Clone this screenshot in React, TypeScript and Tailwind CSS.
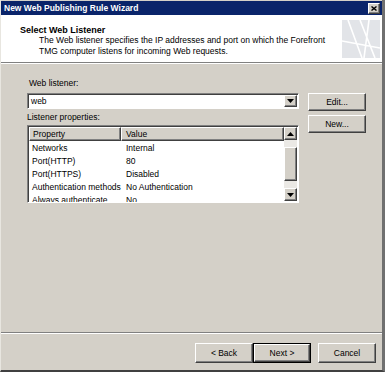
const raised =
  'border border-t-white border-l-white border-r-[#404040] border-b-[#404040] shadow-[inset_-1px_-1px_#808080] bg-[#d4d0c8]'
const sunken =
  'border border-t-[#808080] border-l-[#808080] border-r-white border-b-white shadow-[inset_1px_1px_#404040]'

const rows = [
  ['Networks', 'Internal'],
  ['Port(HTTP)', '80'],
  ['Port(HTTPS)', 'Disabled'],
  ['Authentication methods', 'No Authentication'],
  ['Always authenticate', 'No'],
]

function Arrow({ up }: { up?: boolean }) {
  return (
    <svg width="7" height="4" viewBox="0 0 7 4" className={up ? '' : 'rotate-180'}>
      <path d="M3.5 0 L7 4 L0 4 Z" fill="#000" />
    </svg>
  )
}

function Button({ label, primary }: { label: string; primary?: boolean }) {
  if (primary) {
    return (
      <div className="border border-black">
        <div className={`${raised} w-[56px] h-[18px] flex items-center justify-center`}>{label}</div>
      </div>
    )
  }
  return <div className={`${raised} w-[58px] h-[20px] flex items-center justify-center`}>{label}</div>
}

export default function App() {
  return (
    <div className="w-[385px] h-[372px] bg-[#d4d0c8] flex flex-col border-l border-l-[#e8e6e0] border-r-[3px] border-r-[#707070] border-b-2 border-b-[#404040] font-['Liberation_Sans',Arial,sans-serif] text-[8.5px] text-black leading-none overflow-hidden">
      {/* Title bar */}
      <div className="mt-[1px] h-[14px] bg-[#0a246a] flex items-center justify-between pl-[3px] pr-[2px]">
        <span className="text-white font-bold text-[8.5px]">New Web Publishing Rule Wizard</span>
        <div className={`${raised} w-[12px] h-[11px] flex items-center justify-center`}>
          <svg width="6" height="5" viewBox="0 0 6 5">
            <path d="M0.5 0.5 L5.5 4.5 M5.5 0.5 L0.5 4.5" stroke="#000" strokeWidth="1.4" />
          </svg>
        </div>
      </div>

      {/* Header */}
      <div className="h-[47px] bg-white flex items-start justify-between pl-[19px] pr-[2px] pt-[4px]">
        <div className="flex flex-col pt-[3px]">
          <span className="font-bold text-[9px] mt-[4px]">Select Web Listener</span>
          <span className="ml-[19px] leading-[11px]">
            The Web listener specifies the IP addresses and port on which the Forefront
            <br />
            TMG computer listens for incoming Web requests.
          </span>
        </div>
        <svg width="38" height="38" viewBox="0 0 38 38" className="mt-[1px]">
          <rect width="38" height="38" fill="#e2e4e8" />
          <path d="M6 0 L20 38 M18 0 L33 38 M0 21 L38 28 M27 0 L22 38" stroke="#fff" strokeWidth="1.6" />
        </svg>
      </div>
      <div className="h-[1px] bg-[#808080]" />
      <div className="h-[1px] bg-white" />

      {/* Body */}
      <div className="flex pl-[26px] pt-[15px] gap-[9px]">
        <div className="w-[272px] flex flex-col">
          <span className="h-[11px] pl-[2px]">Web listener:</span>
          <div className={`${sunken} mt-[3px] h-[16px] bg-white flex items-center justify-between`}>
            <span className="pl-[3px]">web</span>
            <div className={`${raised} w-[13px] h-[12px] mr-[1px] flex items-center justify-center`}>
              <Arrow />
            </div>
          </div>
          <span className="mt-[4px] h-[11px]">Listener properties:</span>
          <div className={`${sunken} mt-[1px] h-[78px] bg-white flex overflow-hidden`}>
            <div className="flex-1 flex flex-col pt-[1px] pl-[1px]">
              <div className="flex h-[14px] shrink-0">
                <div className={`${raised} w-[92px] flex items-center pl-[3px] pt-[1px]`}>Property</div>
                <div className={`${raised} flex-1 flex items-center pl-[4px] pt-[1px]`}>Value</div>
              </div>
              <div className="flex flex-col">
                {rows.map(([k, v]) => (
                  <div key={k} className="flex h-[13px] items-center shrink-0 pt-[1px]">
                    <span className="w-[93px] pl-[3px] whitespace-nowrap">{k}</span>
                    <span className="pl-[4px]">{v}</span>
                  </div>
                ))}
              </div>
            </div>
            <div className="w-[13px] mt-[1px] mr-[1px] mb-[1px] flex flex-col bg-[#ebe9e5]">
              <div className={`${raised} h-[13px] flex items-center justify-center`}>
                <Arrow up />
              </div>
              <div className="h-[7px]" />
              <div className={`${raised} h-[34px]`} />
              <div className="flex-1" />
              <div className={`${raised} h-[13px] flex items-center justify-center`}>
                <Arrow />
              </div>
            </div>
          </div>
        </div>
        <div className="flex flex-col gap-[4px] mt-[14px]">
          <div className={`${raised} w-[58px] h-[18px] flex items-center justify-center`}>Edit...</div>
          <div className={`${raised} w-[58px] h-[18px] flex items-center justify-center`}>New...</div>
        </div>
      </div>

      <div className="flex-1" />

      {/* Footer */}
      <div className="h-[1px] bg-[#808080]" />
      <div className="h-[1px] bg-white" />
      <div className="flex justify-end pr-[6px] pt-[9px] pb-[7px]">
        <Button label="< Back" />
        <Button label="Next >" primary />
        <div className="ml-[7px]">
          <Button label="Cancel" />
        </div>
      </div>
    </div>
  )
}
